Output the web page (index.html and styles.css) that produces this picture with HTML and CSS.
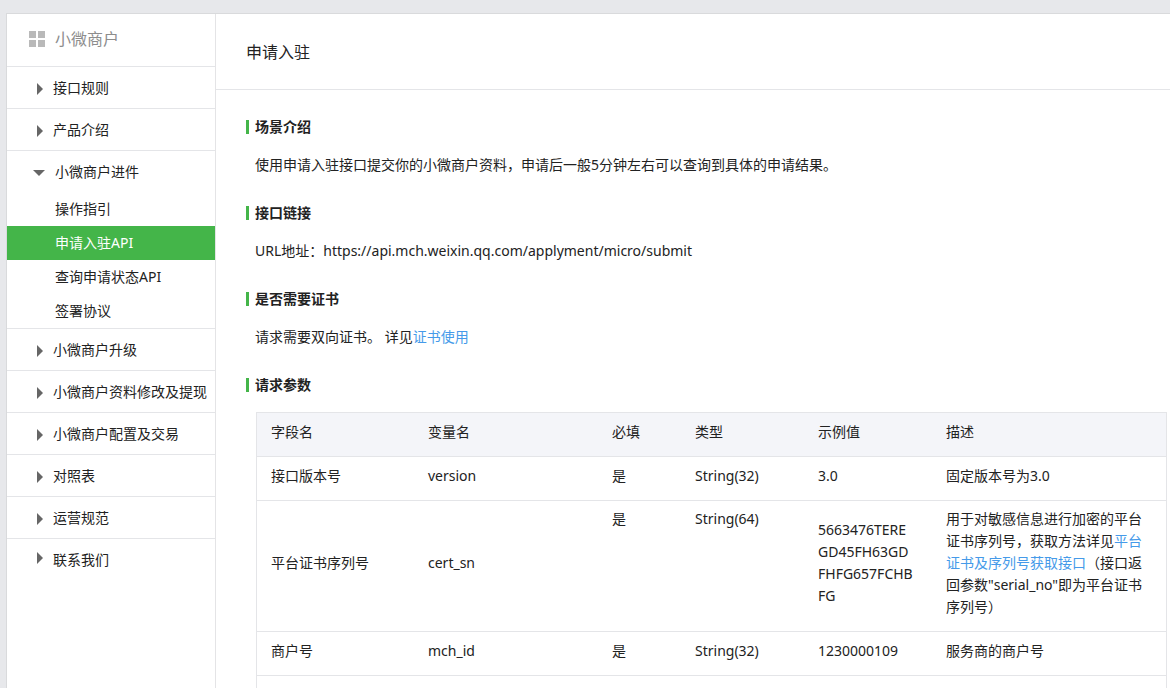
FILE: index.html
```html
<!DOCTYPE html>
<html lang="zh-CN">
<head>
<meta charset="utf-8">
<meta name="viewport" content="width=device-width, initial-scale=1">
<title>申请入驻</title>
<link rel="stylesheet" href="styles.css">
</head>
<body>
<div class="panel">
  <nav class="sidebar" aria-label="小微商户">
    <h2 class="sidebar-title">
      <svg class="grid-icon" width="16" height="16" viewBox="0 0 16 16" aria-hidden="true"><path d="M0 0h7v7H0zM9 0h7v7H9zM0 9h7v7H0zM9 9h7v7H9z" fill="#b9b9b9"/></svg>
      小微商户
    </h2>
    <ul class="menu">
      <li class="group"><button class="toggle" type="button"><span class="arrow"></span>接口规则</button></li>
      <li class="group"><button class="toggle" type="button"><span class="arrow"></span>产品介绍</button></li>
      <li class="group">
        <button class="toggle open" type="button" aria-expanded="true"><span class="arrow"></span>小微商户进件</button>
        <ul class="submenu">
          <li><a class="sublink" href="#guide">操作指引</a></li>
          <li><a class="sublink active" href="#apply" aria-current="page">申请入驻API</a></li>
          <li><a class="sublink" href="#status">查询申请状态API</a></li>
          <li><a class="sublink" href="#sign">签署协议</a></li>
        </ul>
      </li>
      <li class="group"><button class="toggle" type="button"><span class="arrow"></span>小微商户升级</button></li>
      <li class="group"><button class="toggle" type="button"><span class="arrow"></span>小微商户资料修改及提现</button></li>
      <li class="group"><button class="toggle" type="button"><span class="arrow"></span>小微商户配置及交易</button></li>
      <li class="group"><button class="toggle" type="button"><span class="arrow"></span>对照表</button></li>
      <li class="group"><button class="toggle" type="button"><span class="arrow"></span>运营规范</button></li>
      <li class="group"><button class="toggle leaf" type="button"><span class="arrow"></span>联系我们</button></li>
    </ul>
  </nav>
  <main class="main">
    <header class="page-head"><h1 class="page-title">申请入驻</h1></header>
    <div class="content">
      <section class="section">
        <h3 class="section-title">场景介绍</h3>
        <p class="text">使用申请入驻接口提交你的小微商户资料，申请后一般5分钟左右可以查询到具体的申请结果。</p>
      </section>
      <section class="section">
        <h3 class="section-title">接口链接</h3>
        <p class="text">URL地址：https://api.mch.weixin.qq.com/applyment/micro/submit</p>
      </section>
      <section class="section">
        <h3 class="section-title">是否需要证书</h3>
        <p class="text">请求需要双向证书。 详见<a class="link" href="#cert">证书使用</a></p>
      </section>
      <section class="section">
        <h3 class="section-title">请求参数</h3>
        <table class="params">
          <colgroup>
            <col class="col-field"><col class="col-name"><col class="col-required"><col class="col-type"><col class="col-sample"><col>
          </colgroup>
          <thead>
            <tr><th scope="col">字段名</th><th scope="col">变量名</th><th scope="col">必填</th><th scope="col">类型</th><th scope="col">示例值</th><th scope="col">描述</th></tr>
          </thead>
          <tbody>
            <tr><td>接口版本号</td><td>version</td><td>是</td><td>String(32)</td><td>3.0</td><td>固定版本号为3.0</td></tr>
            <tr class="long"><td>平台证书序列号</td><td>cert_sn</td><td class="top">是</td><td class="top">String(64)</td><td>5663476TERE<wbr>GD45FH63GD<wbr>FHFG657FCHB<wbr>FG</td><td>用于对敏感信息进行加密的平台证书序列号，获取方法详见<a class="link" href="#serial">平台证书及序列号获取接口</a>（接口返回参数"serial_no"即为平台证书序列号）</td></tr>
            <tr><td>商户号</td><td>mch_id</td><td>是</td><td>String(32)</td><td>1230000109</td><td>服务商的商户号</td></tr>
            <tr><td></td><td></td><td></td><td></td><td></td><td></td></tr>
          </tbody>
        </table>
      </section>
    </div>
  </main>
</div>
</body>
</html>
```
FILE: styles.css
```css
* { box-sizing: border-box; }

body {
  margin: 0;
  height: 100vh;
  overflow: hidden;
  padding: 13px 0 0 6px;
  background: #e7e8eb;
  color: #222;
  font: 14px/22px "Noto Sans", "Noto Sans CJK SC", sans-serif;
}

h1, h2, h3, p, ul { margin: 0; padding: 0; font-weight: 400; }
ul { list-style: none; }

.panel {
  display: flex;
  height: 100%;
  overflow: hidden;
  background: #fff;
  border: 1px solid #d9dadc;
  border-width: 1px 0 0 1px;
}

.sidebar {
  flex: 0 0 209px;
  border-right: 1px solid #e4e4e6;
}

.sidebar-title {
  display: flex;
  align-items: center;
  gap: 10px;
  height: 52px;
  padding: 0 0 2px 22px;
  color: #8d8d8d;
  font-size: 16px;
}

.group { border-top: 1px solid #e4e5e8; }

.toggle {
  display: flex;
  align-items: center;
  gap: 10px;
  width: 100%;
  height: 41px;
  padding: 0 0 0 30px;
  border: 0;
  background: none;
  color: inherit;
  font: inherit;
  white-space: nowrap;
  cursor: pointer;
}

.arrow {
  margin-top: 2px;
  border: 6px solid transparent;
  border-left-color: #666;
  border-right-width: 0;
}

.toggle.open { padding-left: 26px; }
.open .arrow {
  border: 6px solid transparent;
  border-top-color: #666;
  border-bottom-width: 0;
}
.leaf .arrow { margin: 0 0 4px; }

.sublink {
  display: block;
  padding: 6px 0 6px 48px;
  color: inherit;
  text-decoration: none;
}

.sublink.active { background: #44b549; color: #fff; }

.main { flex: 1; min-width: 0; }

.page-head {
  padding: 25px 30px 24px;
  border-bottom: 1px solid #e4e5e8;
}

.page-title { font-size: 16px; line-height: 26px; }

.content { padding: 30px 3px 0 30px; }

.section { margin-bottom: 30px; }

.section-title {
  display: flex;
  align-items: center;
  gap: 6px;
  font-size: 14px;
  line-height: 14px;
  font-weight: 700;
}

.section-title::before {
  content: "";
  width: 3px;
  height: 14px;
  background: #44b549;
}

.text { padding: 20px 0 0 9px; }

.link { color: #459ae9; text-decoration: none; }

.params {
  width: calc(100% - 10px);
  margin: 20px 0 0 10px;
  table-layout: fixed;
  border-collapse: separate;
  border-spacing: 0;
  border: 1px solid #e4e5e8;
  border-bottom: 0;
}

.col-field { width: 157px; }
.col-name { width: 184px; }
.col-required { width: 83px; }
.col-type { width: 123px; }
.col-sample { width: 128px; }

.params th,
.params td {
  padding: 8px 14px 13px;
  border-bottom: 1px solid #e4e5e8;
  font-weight: 400;
  text-align: left;
}

.params th { background: #f4f5f9; }
.params .long td { padding-top: 7px; }
.params .top { vertical-align: top; }
```
